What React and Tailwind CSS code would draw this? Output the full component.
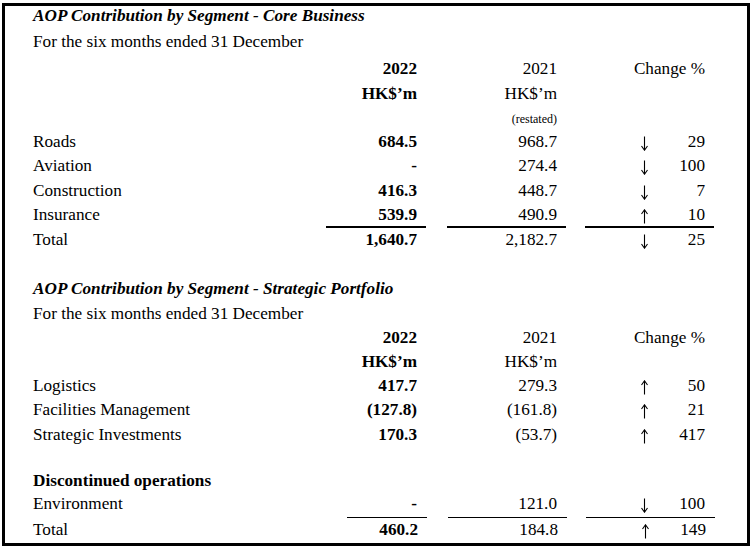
const core = [
  { label: "Roads", a: "684.5", b: "968.7", dir: "down", pct: "29", h: "h-[24px]" },
  { label: "Aviation", a: "-", b: "274.4", dir: "down", pct: "100", h: "h-[25px]" },
  { label: "Construction", a: "416.3", b: "448.7", dir: "down", pct: "7", h: "h-[24px]" },
  { label: "Insurance", a: "539.9", b: "490.9", dir: "up", pct: "10", h: "h-[25px]" },
];

const strategic = [
  { label: "Logistics", a: "417.7", b: "279.3", dir: "up", pct: "50", h: "h-[24px]" },
  { label: "Facilities Management", a: "(127.8)", b: "(161.8)", dir: "up", pct: "21", h: "h-[25px]" },
  { label: "Strategic Investments", a: "170.3", b: "(53.7)", dir: "up", pct: "417", h: "h-[46px]" },
];

function Arrow({ dir }) {
  return (
    <svg width="9" height="15" viewBox="0 0 9 15" className="mt-[6px]">
      {dir === "up" ? (
        <path d="M4.5 14.5V1M1.5 5L4.5 0.8L7.5 5" fill="none" stroke="black" strokeWidth="1.1" />
      ) : (
        <path d="M4.5 0.5V14M1.5 10L4.5 14.2L7.5 10" fill="none" stroke="black" strokeWidth="1.1" />
      )}
    </svg>
  );
}

function Row({ label, a, b, dir, pct, line, h }) {
  // line: "thick" for core total, "thin" for strategic total
  const c1 =
    line === "thick"
      ? "border-t-2 -mt-[2px] border-black w-[100px]"
      : line === "thin"
      ? "border-t -mt-px border-black w-[80px] ml-[21px]"
      : "w-[100px]";
  const c2 =
    line === "thick"
      ? "border-t-2 -mt-[2px] border-black"
      : line === "thin"
      ? "border-t -mt-px border-black"
      : "";
  return (
    <div className={`flex items-start leading-[24px] ${h}`}>
      <div className="w-[293px]">{label}</div>
      <div className={`${c1} text-right pr-[9px] font-bold`}>{a}</div>
      <div className={`${c2} ml-[21px] w-[119px] text-right pr-[9px]`}>{b}</div>
      <div className={`${c2} ml-[19px] w-[129px] flex pl-[55px] pr-[9px]`}>
        <Arrow dir={dir} />
        <span className="flex-1 text-right">{pct}</span>
      </div>
    </div>
  );
}

function Header({ restated }) {
  return (
    <>
      <div className={`flex leading-[24px] ${restated ? "h-[25px]" : "h-[24px]"}`}>
        <div className="w-[293px]" />
        <div className="w-[100px] text-right pr-[9px] font-bold">2022</div>
        <div className="ml-[21px] w-[119px] text-right pr-[9px]">2021</div>
        <div className="ml-[19px] w-[129px] text-right pr-[9px]">Change %</div>
      </div>
      <div className={`flex leading-[24px] ${restated ? "h-[25px]" : "h-[24px]"}`}>
        <div className="w-[293px]" />
        <div className="w-[100px] text-right pr-[9px] font-bold">HK$’m</div>
        <div className="ml-[21px] w-[119px] text-right pr-[9px]">HK$’m</div>
      </div>
      {restated && (
        <div className="flex leading-[24px] h-[23px]">
          <div className="w-[293px]" />
          <div className="w-[100px]" />
          <div className="ml-[21px] w-[119px] text-right pr-[9px] text-[12px]">
            (restated)
          </div>
        </div>
      )}
    </>
  );
}

export default function App() {
  return (
    <div
      className="bg-white pt-[3px] pl-[2px] text-black text-[17.2px]"
      style={{ fontFamily: '"Liberation Serif", "Times New Roman", serif' }}
    >
      <div className="w-[748px] h-[543px] border-[3px] border-black pl-[28px] overflow-hidden">
        <div className="-mt-[2px]">
          <div className="h-[26px] leading-[24px] font-bold italic">
            AOP Contribution by Segment - Core Business
          </div>
          <div className="h-[27px] leading-[24px]">
            For the six months ended 31 December
          </div>
          <Header restated />
          {core.map((r) => (
            <Row key={r.label} {...r} />
          ))}
          <Row
            label="Total"
            a="1,640.7"
            b="2,182.7"
            dir="down"
            pct="25"
            line="thick"
            h="h-[49px]"
          />

          <div className="h-[25px] leading-[24px] font-bold italic">
            AOP Contribution by Segment - Strategic Portfolio
          </div>
          <div className="h-[24px] leading-[24px]">
            For the six months ended 31 December
          </div>
          <Header />
          {strategic.map((r) => (
            <Row key={r.label} {...r} />
          ))}
          <div className="h-[23px] leading-[24px] font-bold">
            Discontinued operations
          </div>
          <Row label="Environment" a="-" b="121.0" dir="down" pct="100" h="h-[26px]" />
          <Row label="Total" a="460.2" b="184.8" dir="up" pct="149" line="thin" h="h-[24px]" />
        </div>
      </div>
    </div>
  );
}
